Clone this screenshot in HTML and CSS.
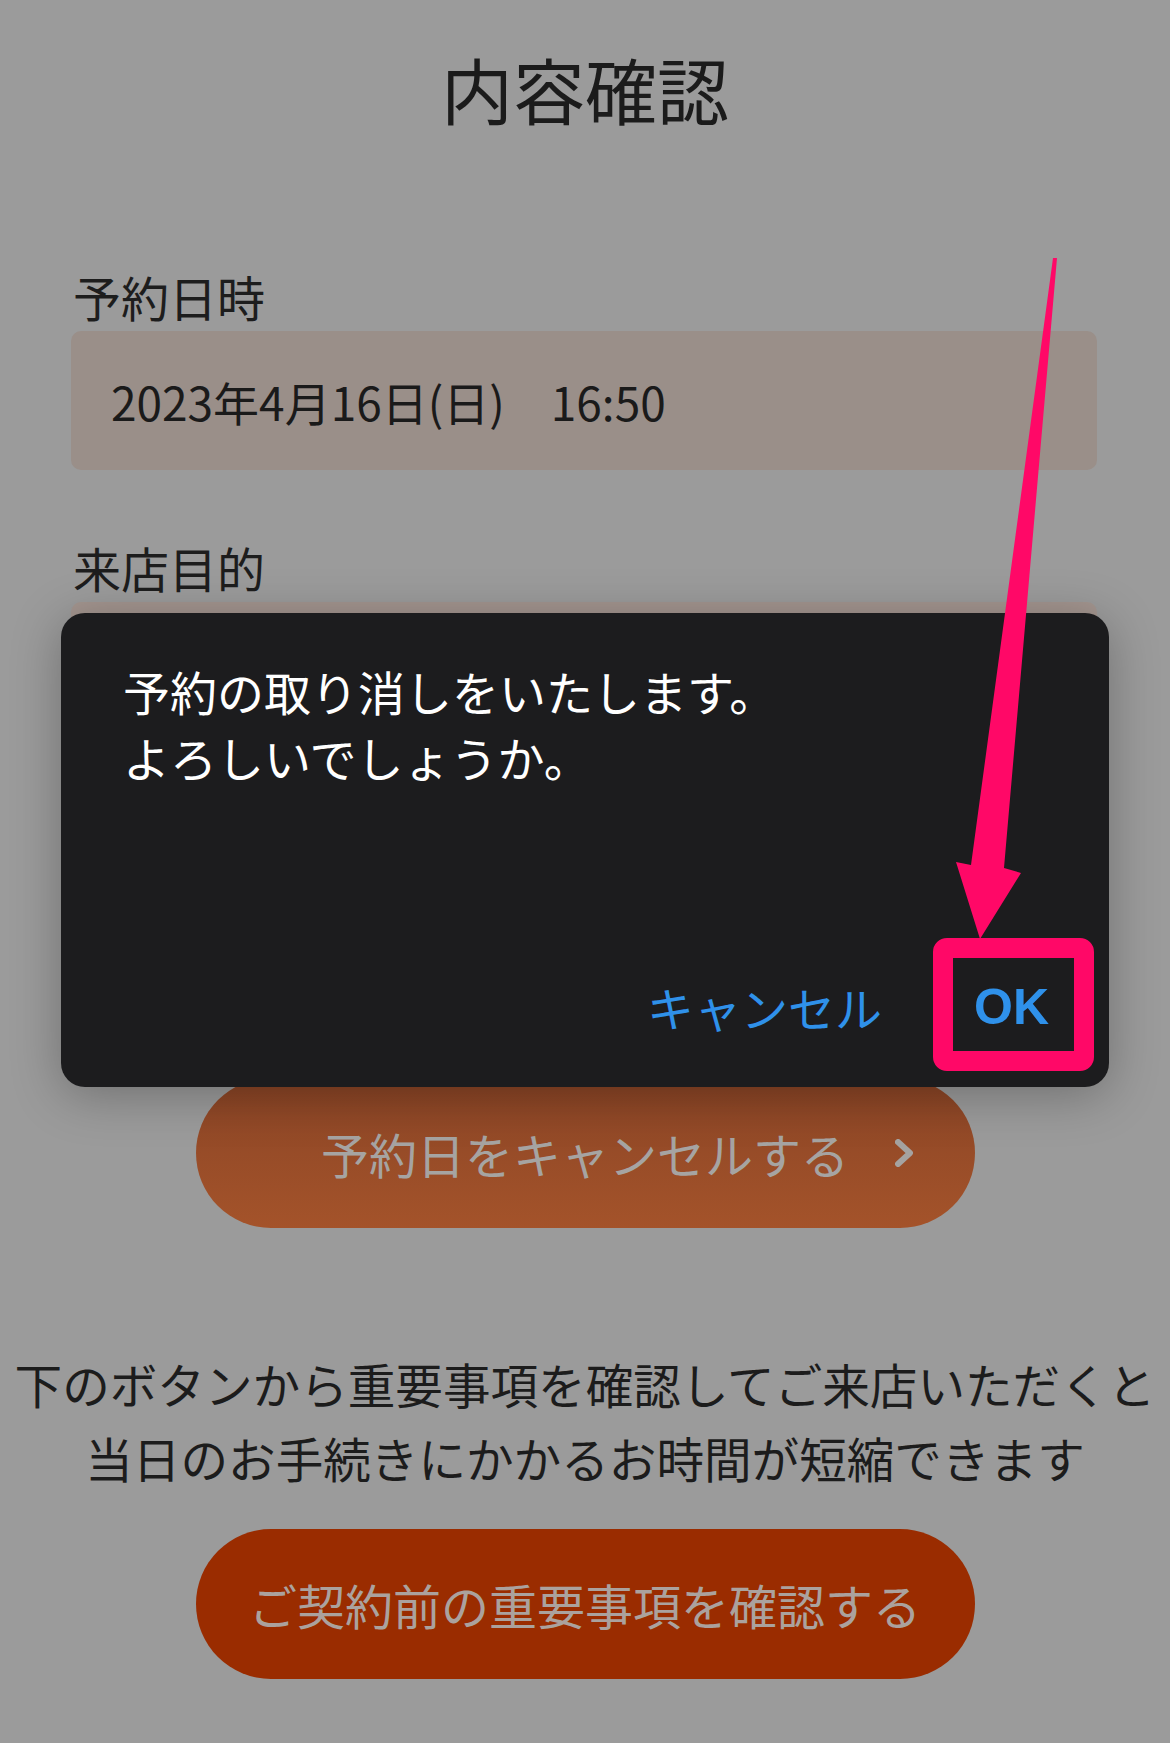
FILE: index.html
```html
<!DOCTYPE html>
<html lang="ja">
<head>
<meta charset="utf-8">
<title>内容確認</title>
<link rel="stylesheet" href="styles.css">
</head>
<body>
<div class="page">
  <main class="content">
    <h1 class="title">内容確認</h1>
    <section class="field">
      <div class="label">予約日時</div>
      <div class="value">2023年4月16日(日)　16:50</div>
    </section>
    <section class="field field-purpose">
      <div class="label">来店目的</div>
      <div class="value value-purpose"></div>
    </section>
    <a class="btn btn-cancel">
      <span class="btn-text">予約日をキャンセルする</span>
      <svg class="chev" width="18" height="28" viewBox="0 0 18 28"><path d="M3 3 L15 14 L3 25" fill="none" stroke="#a5a3a1" stroke-width="6" stroke-linecap="round" stroke-linejoin="round"/></svg>
    </a>
    <p class="note">下のボタンから重要事項を確認してご来店いただくと<br>当日のお手続きにかかるお時間が短縮できます</p>
    <a class="btn btn-primary"><span class="btn-text">ご契約前の重要事項を確認する</span></a>
  </main>

  <div class="dialog">
    <p class="dialog-msg">予約の取り消しをいたします。<br>よろしいでしょうか。</p>
    <div class="dialog-actions">
      <span class="act-cancel">キャンセル</span>
      <span class="act-ok">OK</span>
    </div>
  </div>

  <div class="highlight"></div>
  <svg class="arrow" width="1170" height="1743" viewBox="0 0 1170 1743">
    <polygon points="1053,258 1057,258 1004,868 1021,873 980,939 956,862 971,865" fill="#ff0867"/>
  </svg>
</div>
</body>
</html>
```

FILE: styles.css
```css
html, body {
  margin: 0;
  padding: 0;
}

body {
  background: #9b9b9b;
  font-family: "Noto Sans CJK JP", "Noto Sans", sans-serif;
  color: #1d1d1d;
}

.page {
  position: relative;
  width: 1170px;
  min-height: 1743px;
  overflow: hidden;
}

.content {
  display: flex;
  flex-direction: column;
}

.title {
  margin: 0;
  padding-top: 38px;
  font-size: 72px;
  font-weight: 400;
  line-height: 100px;
  text-align: center;
  color: #1b1b1b;
}

.field {
  display: flex;
  flex-direction: column;
  margin: 126px 73px 0 71px;
}

.field-purpose {
  margin-top: 65px;
}

.label {
  font-size: 48px;
  line-height: 64px;
  margin-bottom: 3px;
  padding-left: 2px;
}

.value {
  height: 139px;
  box-sizing: border-box;
  background: #9a8f89;
  border-radius: 10px;
  display: flex;
  align-items: center;
  padding-left: 40px;
  font-size: 46px;
  color: #1a1a1a;
}

.value-purpose {
  background: #a3958f;
}

.btn {
  display: grid;
  grid-template-columns: 1fr auto 1fr;
  align-items: center;
  width: 779px;
  height: 150px;
  margin: 0 auto;
  border-radius: 75px;
  box-sizing: border-box;
  font-size: 48px;
  line-height: 1;
  color: #a6a4a2;
}

.btn-text {
  grid-column: 2;
}

.btn-cancel {
  margin-top: 337px;
  background: linear-gradient(#8b4526, #a4532a);
}

.chev {
  grid-column: 3;
  justify-self: end;
  margin-right: 62px;
  display: block;
}

.note {
  margin: 119px 0 0;
  font-size: 47.6px;
  line-height: 74px;
  text-align: center;
  color: #1c1c1c;
  white-space: nowrap;
}

.btn-primary {
  margin-top: 34px;
  background: #9a2c00;
  color: #aba29e;
}

/* alert dialog over the page */
.dialog {
  position: absolute;
  left: 61px;
  top: 613px;
  width: 1048px;
  height: 474px;
  box-sizing: border-box;
  background: #1c1c1e;
  border-radius: 24px;
  box-shadow: 0 8px 50px rgba(0, 0, 0, 0.28);
  display: flex;
  flex-direction: column;
}

.dialog-msg {
  margin: 0;
  padding: 45px 60px 0 62px;
  font-size: 47px;
  line-height: 66px;
  color: #ffffff;
}

.dialog-actions {
  margin-top: auto;
  display: flex;
  justify-content: flex-end;
  align-items: center;
  gap: 92px;
  padding: 0 60px 50px 0;
  line-height: 60px;
}

.act-cancel {
  font-size: 47px;
  color: #2f91ea;
}

.act-ok {
  font-family: "Liberation Sans", Arial, sans-serif;
  font-weight: 700;
  font-size: 50px;
  color: #2f91ea;
}

/* annotation */
.highlight {
  position: absolute;
  left: 933px;
  top: 938px;
  width: 161px;
  height: 133px;
  box-sizing: border-box;
  border: 20px solid #ff0867;
  border-radius: 14px;
}

.arrow {
  position: absolute;
  left: 0;
  top: 0;
  pointer-events: none;
}
```
